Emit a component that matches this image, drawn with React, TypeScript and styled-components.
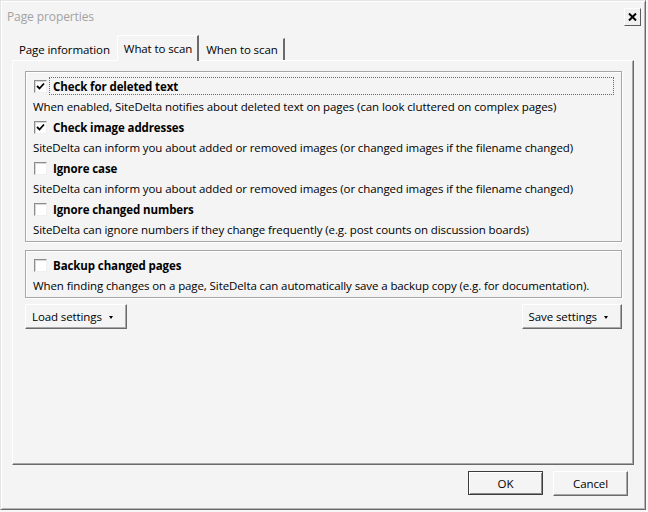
import * as React from "react";
import styled, { createGlobalStyle } from "styled-components";

// classic win dialog, "What to scan" tab

const GlobalStyle = createGlobalStyle`
    html, body {
        margin: 0;
        padding: 0;
        background: #f6f6f6;
    }
    body {
        font-family: "Open Sans", "Noto Sans", sans-serif;
        font-size: 11.5px;
        letter-spacing: -0.1px;
        color: #000;
    }
`;

const Window = styled.div`
    width: 646px;
    height: 510px;
    box-sizing: border-box;
    background: #f4f4f4;
    border: 1px solid;
    border-color: #e4e4e4 #6a6a6a #6a6a6a #e4e4e4;
    box-shadow: inset 1px 1px 0 #fff, inset -1px -1px 0 #b4b4b4;
    display: flex;
    flex-direction: column;
`;

const TitleBar = styled.div`
    height: 33px;
    display: flex;
    align-items: center;
    justify-content: space-between;
    padding: 0 4px 0 6px;
    flex-shrink: 0;
`;

const Title = styled.span`
    color: #a2a2a2;
    font-size: 12px;
    margin-top: -2px;
`;

const CloseButton = styled.div`
    width: 17px;
    height: 18px;
    box-sizing: border-box;
    border: 1px solid;
    border-color: #fff #5c5c5c #5c5c5c #fff;
    background: #f0f0f0;
    display: flex;
    align-items: center;
    justify-content: center;
    margin-top: -2px;
`;

const Body = styled.div`
    flex: 1;
    display: flex;
    flex-direction: column;
    padding: 0 11px 0 11px;
`;

const TabStrip = styled.div`
    display: flex;
    align-items: flex-end;
    height: 26px;
`;

const Tab = styled.div<{ $active?: boolean; $last?: boolean }>`
    height: ${(p) => (p.$active ? 26 : 22)}px;
    box-sizing: border-box;
    padding: 0 5px 0 6px;
    display: flex;
    align-items: center;
    white-space: nowrap;
    border-top: 1px solid ${(p) => (p.$active ? "#fff" : "transparent")};
    border-left: 1px solid ${(p) => (p.$active ? "#fff" : "transparent")};
    border-right: 2px solid
        ${(p) => (p.$active || p.$last ? "#6a6a6a" : "transparent")};
    background: #f4f4f4;
    position: relative;
    z-index: ${(p) => (p.$active ? 1 : 0)};
    margin-bottom: ${(p) => (p.$active ? -1 : 0)}px;
`;

const Panel = styled.div`
    flex: 1;
    box-sizing: border-box;
    border: 1px solid;
    border-color: #fff #6a6a6a #6a6a6a #fff;
    box-shadow: inset -1px -1px 0 #a8a8a8;
    padding: 10px 11px 0 12px;
    display: flex;
    flex-direction: column;
    gap: 8px;
`;

const GroupBox = styled.div`
    border: 1px solid #a6a6a6;
    box-shadow: inset 1px 1px 0 #fff, 1px 1px 0 #fff;
    padding: 4px 0 1px 0;
    display: flex;
    flex-direction: column;
`;

const CheckRow = styled.div`
    height: 20px;
    display: flex;
    align-items: center;
    padding: 0 7px 0 8px;
`;

const Box = styled.span`
    width: 13px;
    height: 13px;
    box-sizing: border-box;
    flex-shrink: 0;
    border: 1px solid;
    border-color: #8c8c8c #f0f0f0 #f0f0f0 #8c8c8c;
    box-shadow: inset 1px 1px 0 #d8d8d8;
    background: #fff;
    display: flex;
    align-items: center;
    justify-content: center;
`;

const CheckLabel = styled.span<{ $focused?: boolean }>`
    flex: 1;
    margin-left: 2px;
    height: 18px;
    box-sizing: border-box;
    display: flex;
    align-items: center;
    padding-left: 3px;
    font-weight: 700;
    border: 1px dotted ${(p) => (p.$focused ? "#6a6a6a" : "transparent")};
`;

const Description = styled.div`
    height: 21px;
    display: flex;
    align-items: center;
    padding-left: 7px;
    white-space: nowrap;
`;

const ButtonRow = styled.div`
    display: flex;
    justify-content: space-between;
    margin-top: -2px;
`;

const Button = styled.div<{ $default?: boolean }>`
    height: ${(p) => (p.$default ? 24 : 25)}px;
    width: 75px;
    box-sizing: border-box;
    display: flex;
    align-items: center;
    justify-content: center;
    border: 1px solid;
    border-color: ${(p) =>
        p.$default ? "#3c3c3c" : "#fff #6a6a6a #6a6a6a #fff"};
    box-shadow: ${(p) =>
        p.$default
            ? "inset 1px 1px 0 #fff, inset -1px -1px 0 #8a8a8a"
            : "inset -1px -1px 0 #a8a8a8"};
    background: #f4f4f4;
    white-space: nowrap;
`;

const MenuButton = styled(Button)`
    width: auto;
    justify-content: space-between;
    gap: 7px;
    padding: 0 13px 0 6px;
`;

const Arrow = styled.span`
    width: 0;
    height: 0;
    border-left: 2.5px solid transparent;
    border-right: 2.5px solid transparent;
    border-top: 3px solid #000;
    margin-top: 1px;
`;

const Footer = styled.div`
    height: 44px;
    flex-shrink: 0;
    display: flex;
    justify-content: flex-end;
    align-items: flex-start;
    gap: 10px;
    padding: 6px 17px 0 0;
    box-sizing: border-box;
`;

function CheckMark() {
    return (
        <svg width="9" height="9" viewBox="0 0 9 9">
            <path
                d="M1 4 L3.5 6.5 L8 1.5"
                fill="none"
                stroke="#000"
                strokeWidth="1.8"
            />
        </svg>
    );
}

function CheckItem(props: {
    label: string;
    checked?: boolean;
    focused?: boolean;
    description: string;
}) {
    return (
        <>
            <CheckRow>
                <Box>{props.checked && <CheckMark />}</Box>
                <CheckLabel $focused={props.focused}>{props.label}</CheckLabel>
            </CheckRow>
            <Description>{props.description}</Description>
        </>
    );
}

const imagesText =
    "SiteDelta can inform you about added or removed images (or changed images if the filename changed)";

export default function App() {
    return (
        <>
            <GlobalStyle />
            <Window>
                <TitleBar>
                    <Title>Page properties</Title>
                    <CloseButton>
                        <svg width="9" height="8" viewBox="0 0 9 8">
                            <path
                                d="M1 0.5 L8 7.5 M8 0.5 L1 7.5"
                                stroke="#000"
                                strokeWidth="2"
                            />
                        </svg>
                    </CloseButton>
                </TitleBar>
                <Body>
                    <TabStrip>
                        <Tab>Page information</Tab>
                        <Tab $active>What to scan</Tab>
                        <Tab $last>When to scan</Tab>
                    </TabStrip>
                    <Panel>
                        <GroupBox>
                            <CheckItem
                                label="Check for deleted text"
                                checked
                                focused
                                description="When enabled, SiteDelta notifies about deleted text on pages (can look cluttered on complex pages)"
                            />
                            <CheckItem
                                label="Check image addresses"
                                checked
                                description={imagesText}
                            />
                            <CheckItem label="Ignore case" description={imagesText} />
                            <CheckItem
                                label="Ignore changed numbers"
                                description="SiteDelta can ignore numbers if they change frequently (e.g. post counts on discussion boards)"
                            />
                        </GroupBox>
                        <GroupBox>
                            <CheckItem
                                label="Backup changed pages"
                                description="When finding changes on a page, SiteDelta can automatically save a backup copy (e.g. for documentation)."
                            />
                        </GroupBox>
                        <ButtonRow>
                            <MenuButton>
                                Load settings
                                <Arrow />
                            </MenuButton>
                            <MenuButton>
                                Save settings
                                <Arrow />
                            </MenuButton>
                        </ButtonRow>
                    </Panel>
                </Body>
                <Footer>
                    <Button $default>OK</Button>
                    <Button>Cancel</Button>
                </Footer>
            </Window>
        </>
    );
}
